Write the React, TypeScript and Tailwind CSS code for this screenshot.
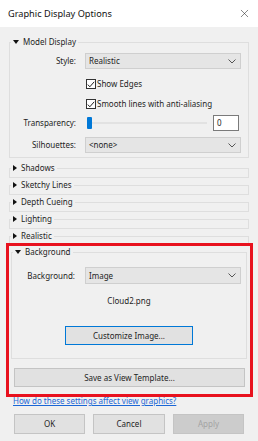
import React from "react";
import { X } from "lucide-react";

const font = { fontFamily: '"Noto Sans", "Open Sans", sans-serif' };

function DownTri() {
  return (
    <svg width="6" height="4" viewBox="0 0 6 4" className="shrink-0">
      <polygon points="0,0 6,0 3,4" fill="#111" />
    </svg>
  );
}

function RightTri() {
  return (
    <svg width="4" height="6" viewBox="0 0 4 6" className="shrink-0">
      <polygon points="0,0 4,3 0,6" fill="#111" />
    </svg>
  );
}

function Chevron() {
  return (
    <svg width="8" height="5" viewBox="0 0 8 5">
      <polyline points="0.5,0.5 4,4 7.5,0.5" fill="none" stroke="#555" strokeWidth="1" />
    </svg>
  );
}

function Dropdown({ value, h = "h-[16px]" }: { value: string; h?: string }) {
  return (
    <div className={`ml-[9px] w-[156px] ${h} bg-[#e5e5e5] border border-[#cfcfcf] flex items-center justify-between pl-[3px] pr-[4px]`}>
      <span>{value}</span>
      <Chevron />
    </div>
  );
}

function Check({ label }: { label: string }) {
  return (
    <div className="flex items-center h-[12px] pl-[76px]">
      <div className="w-[10px] h-[10px] bg-white border border-[#333] flex items-center justify-center">
        <svg width="8" height="7" viewBox="0 0 8 7">
          <polyline points="0.8,3.6 2.8,5.8 7.2,0.8" fill="none" stroke="#222" strokeWidth="1" />
        </svg>
      </div>
      <span className="ml-[1px]">{label}</span>
    </div>
  );
}

function Collapsed({ title, first }: { title: string; first?: boolean }) {
  return (
    <fieldset className={`${first ? "mt-[4px]" : "mt-[1px]"} ml-[9px] w-[240px] border border-[#dedede]`}>
      <legend className="ml-[1px] px-[2px] flex items-center gap-[4px] leading-[12px]">
        <RightTri />
        <span>{title}</span>
      </legend>
      <div className="h-[3px]" />
    </fieldset>
  );
}

export default function App() {
  return (
    <div style={font} className="w-[258px] h-[441px] bg-[#f0f0f0] text-[8px] text-[#1e1e1e] overflow-hidden">
      {/* title bar */}
      <div className="h-[27px] bg-white flex items-center justify-between pl-[8px] pr-[7px]">
        <span className="text-[9.2px] text-[#111] pt-[1px]">Graphic Display Options</span>
        <X size={13} strokeWidth={1} color="#222" />
      </div>

      {/* model display */}
      <fieldset className="mt-[9px] ml-[9px] w-[240px] border border-[#dedede] pb-[4px]">
        <legend className="ml-[1px] px-[2px] flex items-center gap-[4px] leading-[12px]">
          <DownTri />
          <span>Model Display</span>
        </legend>
        <div className="mt-[5px] flex items-center">
          <span className="w-[66px] text-right">Style:</span>
          <Dropdown value="Realistic" />
        </div>
        <div className="mt-[9px]">
          <Check label="Show Edges" />
        </div>
        <div className="mt-[8px]">
          <Check label="Smooth lines with anti-aliasing" />
        </div>
        <div className="mt-[5px] flex items-center h-[16px]">
          <span className="w-[66px] text-right">Transparency:</span>
          <div className="ml-[11px] w-[120px] h-[12px] relative flex items-center">
            <div className="w-full h-[2px] bg-[#e2e2e2]" />
            <div className="absolute left-0 top-0 w-[5px] h-[12px] bg-[#0078d7] rounded-[1px]" />
          </div>
          <div className="ml-[6px] w-[26px] h-[16px] bg-white border border-[#7a7a7a] flex items-center pl-[3px]">0</div>
        </div>
        <div className="mt-[6px] flex items-center">
          <span className="w-[66px] text-right">Silhouettes:</span>
          <Dropdown value="<none>" />
        </div>
      </fieldset>

      <Collapsed title="Shadows" first />
      <Collapsed title="Sketchy Lines" />
      <Collapsed title="Depth Cueing" />
      <Collapsed title="Lighting" />
      <Collapsed title="Realistic" />

      {/* highlighted region */}
      <div className="-mt-[3px] ml-[6px] w-[247px] border-[3px] border-[#e8111e] pb-[7px]">
        <fieldset className="ml-[2px] w-[236px] border border-[#dedede] pb-[13px]">
          <legend className="ml-[1px] px-[2px] flex items-center gap-[4px] leading-[12px]">
            <DownTri />
            <span>Background</span>
          </legend>
          <div className="mt-[9px] flex items-center">
            <span className="w-[63px] text-right">Background:</span>
            <div className="ml-[1px]">
              <Dropdown value="Image" h="h-[17px]" />
            </div>
          </div>
          <div className="mt-[11px] leading-[12px] text-center">Cloud2.png</div>
          <div className="mt-[19px] flex justify-center">
            <div className="w-[128px] h-[19px] bg-[#e1e1e1] border border-[#0078d7] flex items-center justify-center">
              Customize Image...
            </div>
          </div>
        </fieldset>
        <div className="mt-[9px] ml-[5px] w-[231px] h-[19px] bg-[#e1e1e1] border border-[#c4c4c4] flex items-center justify-center">
          Save as View Template...
        </div>
      </div>

      <div className="-mt-[1px] ml-[13px] leading-[9px] text-[#1a66d6] underline">How do these settings affect view graphics?</div>

      <div className="mt-[9px] ml-[14px] flex gap-[8px]">
        <div className="w-[71px] h-[20px] bg-[#e1e1e1] border border-[#c4c4c4] flex items-center justify-center">OK</div>
        <div className="w-[72px] h-[20px] bg-[#e1e1e1] border border-[#c4c4c4] flex items-center justify-center">Cancel</div>
        <div className="w-[71px] h-[20px] bg-[#cccccc] border border-[#c4c4c4] flex items-center justify-center text-[#a3a3a3]">Apply</div>
      </div>
    </div>
  );
}
